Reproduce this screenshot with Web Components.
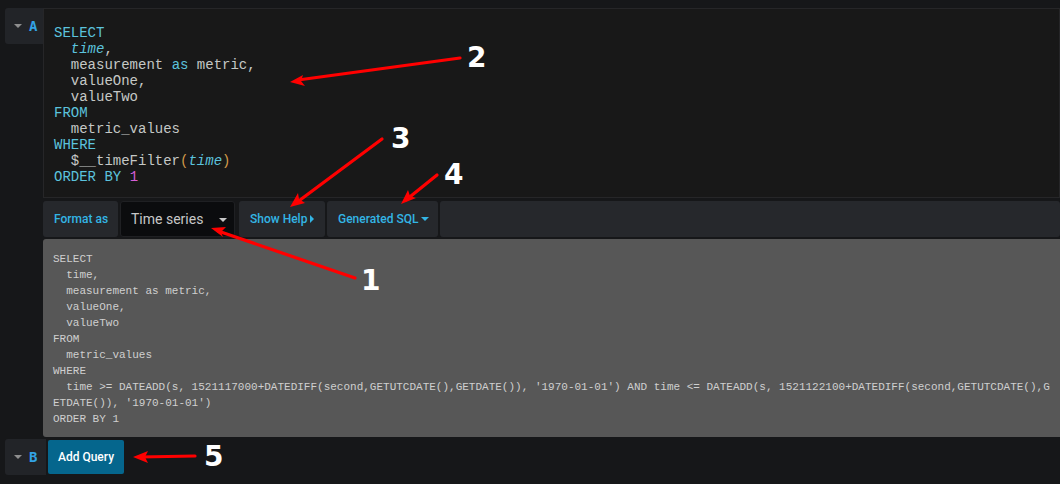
<!DOCTYPE html>
<html>
<head>
<meta charset="utf-8">
<title>Query editor</title>
<style>
  html, body { margin: 0; height: 100%; }
  body { background: #161719; overflow: hidden; font-family: Roboto, sans-serif; }
</style>
</head>
<body>
<query-page>
  <query-tag slot="tag-a" letter="A"></query-tag>
  <code-editor slot="editor"></code-editor>
  <query-toolbar slot="toolbar"></query-toolbar>
  <sql-preview slot="preview"></sql-preview>
  <query-tag slot="tag-b" letter="B" style="width: 41px"></query-tag>
  <add-button slot="add">Add Query</add-button>
</query-page>
<arrow-notes></arrow-notes>

<script>
class QueryPage extends HTMLElement {
  constructor() {
    super();
    this.attachShadow({ mode: 'open' }).innerHTML = `
      <style>
        :host { display: block; padding: 8px 0 0 5px; height: 476px; box-sizing: border-box; }
        .rows { display: grid; grid-template-columns: 38px 1017px; }
        .stack { display: flex; flex-direction: column; }
        .bottom { display: flex; gap: 2px; margin-top: 2px; grid-column: 1 / 3; }
      </style>
      <div class="rows">
        <div><slot name="tag-a"></slot></div>
        <div class="stack">
          <slot name="editor"></slot>
          <slot name="toolbar"></slot>
          <slot name="preview"></slot>
        </div>
        <div class="bottom">
          <slot name="tag-b"></slot>
          <slot name="add"></slot>
        </div>
      </div>`;
  }
}

class QueryTag extends HTMLElement {
  constructor() {
    super();
    this.attachShadow({ mode: 'open' }).innerHTML = `
      <style>
        :host {
          display: flex; align-items: center; gap: 7px;
          width: 38px; height: 36px; box-sizing: border-box; padding-left: 9px;
          background: #222428; border-radius: 3px 0 0 3px;
          font: 700 14px "DejaVu Sans Mono", monospace; color: #33a2e5;
        }
        .caret { width: 0; height: 0; border: 4px solid transparent; border-top-color: #8e8e8e; border-bottom: 0; }
      </style>
      <span class="caret"></span><span id="l"></span>`;
  }
  connectedCallback() {
    this.shadowRoot.getElementById('l').textContent = this.getAttribute('letter');
  }
}

class CodeEditor extends HTMLElement {
  constructor() {
    super();
    this.attachShadow({ mode: 'open' }).innerHTML = `
      <style>
        :host {
          display: block; height: 190px; box-sizing: border-box;
          background: #181818; border: 1px solid #262628; padding: 16px 10px 0;
          font: 14px/16px "Liberation Mono", monospace; color: #c5c8c6;
        }
        pre { margin: 0; font: inherit; }
        .k { color: #5cc3dd; }
        .v { color: #5cc3dd; font-style: italic; }
        .p { color: #d29a4a; }
        .n { color: #d65fd6; }
      </style>
      <pre><span class="k">SELECT</span>
  <span class="v">time</span>,
  measurement <span class="k">as</span> metric,
  valueOne,
  valueTwo
<span class="k">FROM</span>
  metric_values
<span class="k">WHERE</span>
  $__timeFilter<span class="p">(</span><span class="v">time</span><span class="p">)</span>
<span class="k">ORDER BY</span> <span class="n">1</span></pre>`;
  }
}

class QueryToolbar extends HTMLElement {
  constructor() {
    super();
    this.attachShadow({ mode: 'open' }).innerHTML = `
      <style>
        :host {
          display: flex; gap: 2px; height: 36px; margin-top: 3px;
          font: 500 12px Roboto, sans-serif; color: #33b5e5;
        }
        .cell {
          display: flex; align-items: center; box-sizing: border-box;
          background: #26282c; border-radius: 3px; white-space: nowrap;
        }
        .fmt { width: 75px; padding-left: 11px; }
        .sel {
          width: 115px; padding: 0 7px 0 10px; justify-content: space-between;
          background: #0b0c0e; border: 1px solid #1f2023;
          font: 400 14px Roboto, sans-serif; color: #c7c7c7;
        }
        .help { width: 86px; padding-left: 11px; margin-left: 2px; }
        .gen { width: 111px; padding-left: 11px; }
        .fill { flex: 1; }
        .down { width: 0; height: 0; margin-left: 3px; border: 4px solid transparent; border-top-color: currentColor; border-bottom: 0; }
        .sel .down { margin: 2px 0 0; border-top-color: #c7c7c7; }
        .right { width: 0; height: 0; margin-left: 3px; border: 4px solid transparent; border-left-color: currentColor; border-right: 0; }
      </style>
      <div class="cell fmt">Format as</div>
      <div class="cell sel">Time series<span class="down"></span></div>
      <div class="cell help">Show Help<span class="right"></span></div>
      <div class="cell gen">Generated SQL<span class="down"></span></div>
      <div class="cell fill"></div>`;
  }
}

class SqlPreview extends HTMLElement {
  constructor() {
    super();
    this.attachShadow({ mode: 'open' }).innerHTML = `
      <style>
        :host {
          display: block; height: 198px; box-sizing: border-box; margin-top: 2px;
          background: #575757; border-radius: 3px 0 0 3px; padding: 12px 8px 0 10px;
          font: 11px/16px "Liberation Mono", monospace; color: #cfcfcf;
        }
        pre { margin: 0; font: inherit; white-space: pre-wrap; word-break: break-all; }
      </style>
      <pre>SELECT
  time,
  measurement as metric,
  valueOne,
  valueTwo
FROM
  metric_values
WHERE
  time &gt;= DATEADD(s, 1521117000+DATEDIFF(second,GETUTCDATE(),GETDATE()), '1970-01-01') AND time &lt;= DATEADD(s, 1521122100+DATEDIFF(second,GETUTCDATE(),GETDATE()), '1970-01-01')
ORDER BY 1</pre>`;
  }
}

class AddButton extends HTMLElement {
  constructor() {
    super();
    this.attachShadow({ mode: 'open' }).innerHTML = `
      <style>
        :host {
          display: flex; align-items: center; justify-content: center;
          width: 76px; height: 34px; margin-top: 1px; background: #05668d; border-radius: 2px;
          font: 500 12px Roboto, sans-serif; color: #fff;
        }
      </style>
      <slot></slot>`;
  }
}

// red annotations sit over the screenshot, so this layer is absolute
class ArrowNotes extends HTMLElement {
  constructor() {
    super();
    this.attachShadow({ mode: 'open' }).innerHTML = `
      <style>
        :host { position: absolute; left: 0; top: 0; width: 1060px; height: 484px; pointer-events: none; }
        svg { display: block; }
        line { stroke: #f00; stroke-width: 3.2; stroke-linecap: round; }
        polygon { fill: #f00; }
        text { font: 700 28px "DejaVu Sans", sans-serif; fill: #fff; }
      </style>
      <svg width="1060" height="484" viewBox="0 0 1060 484">
        <line x1="460" y1="58" x2="298" y2="80"/>
        <polygon points="290,82 303,75 301,81 305,86"/>
        <text x="467" y="67">2</text>

        <line x1="382" y1="139" x2="296" y2="203"/>
        <polygon points="290,207 298,193 299,199 305,203"/>
        <text x="391" y="148">3</text>

        <line x1="437" y1="175" x2="406" y2="200"/>
        <polygon points="401,204 408,190 410,196 416,198"/>
        <text x="444" y="184">4</text>

        <line x1="355" y1="278" x2="218" y2="231"/>
        <polygon points="211,228 226,227 221,232 223,237"/>
        <text x="361" y="290">1</text>

        <line x1="195" y1="456" x2="140" y2="457"/>
        <polygon points="133,457 148,451 145,457 148,463"/>
        <text x="204" y="466">5</text>
      </svg>`;
  }
}

customElements.define('query-page', QueryPage);
customElements.define('query-tag', QueryTag);
customElements.define('code-editor', CodeEditor);
customElements.define('query-toolbar', QueryToolbar);
customElements.define('sql-preview', SqlPreview);
customElements.define('add-button', AddButton);
customElements.define('arrow-notes', ArrowNotes);
</script>
</body>
</html>
